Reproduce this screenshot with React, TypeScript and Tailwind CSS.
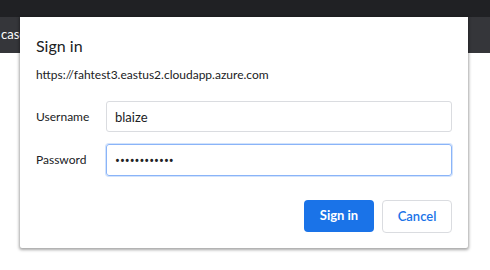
import React from 'react';

export default function App() {
  return (
    <div className="relative h-[270px] w-[490px] overflow-hidden bg-white font-['Lato',sans-serif]">
      <div className="h-[17px] bg-[#202124]" />
      <div className="flex h-[36px] items-center bg-[#35363a] text-[13px] text-white">
        <span className="ml-[1px]">case</span>
      </div>

      <div className="absolute left-[20px] top-[17px] h-[231px] w-[448px] rounded-b-[2px] bg-white shadow-[0_1px_3px_1px_rgba(0,0,0,0.35)]">
        <div className="px-4 pt-[18px]">
          <h1 className="text-[16px] leading-[22px] text-[#202124]">Sign in</h1>
          <p className="mt-[10px] text-[12px] leading-[16px] text-[#202124]">https://fahtest3.eastus2.cloudapp.azure.com</p>

          <div className="mt-[18px] grid grid-cols-[70px_1fr] items-center gap-y-[12px]">
            <label className="text-[12px] text-[#202124]">Username</label>
            <input
              defaultValue="blaize"
              className="h-[31px] w-[346px] rounded-[3px] border border-[#dadce0] px-[8px] text-[13px] text-[#202124] outline-none"
            />
            <label className="text-[12px] text-[#202124]">Password</label>
            <input
              type="password"
              defaultValue="blaizepasswd"
              className="h-[32px] w-[346px] rounded-[3px] border border-[#8ab4f8] px-[8px] font-['Noto_Sans',sans-serif] text-[13px] text-[#202124] outline-none shadow-[0_0_0_1px_#d2e3fc]"
            />
          </div>

          <div className="mt-[24px] flex justify-end gap-[8px]">
            <button className="h-[32px] w-[70px] rounded-[4px] bg-[#1a73e8] text-[13px] font-bold text-white">Sign in</button>
            <button className="h-[33px] w-[70px] rounded-[4px] border border-[#dadce0] bg-white text-[13px] font-semibold text-[#1a73e8]">Cancel</button>
          </div>
        </div>
      </div>
    </div>
  );
}
